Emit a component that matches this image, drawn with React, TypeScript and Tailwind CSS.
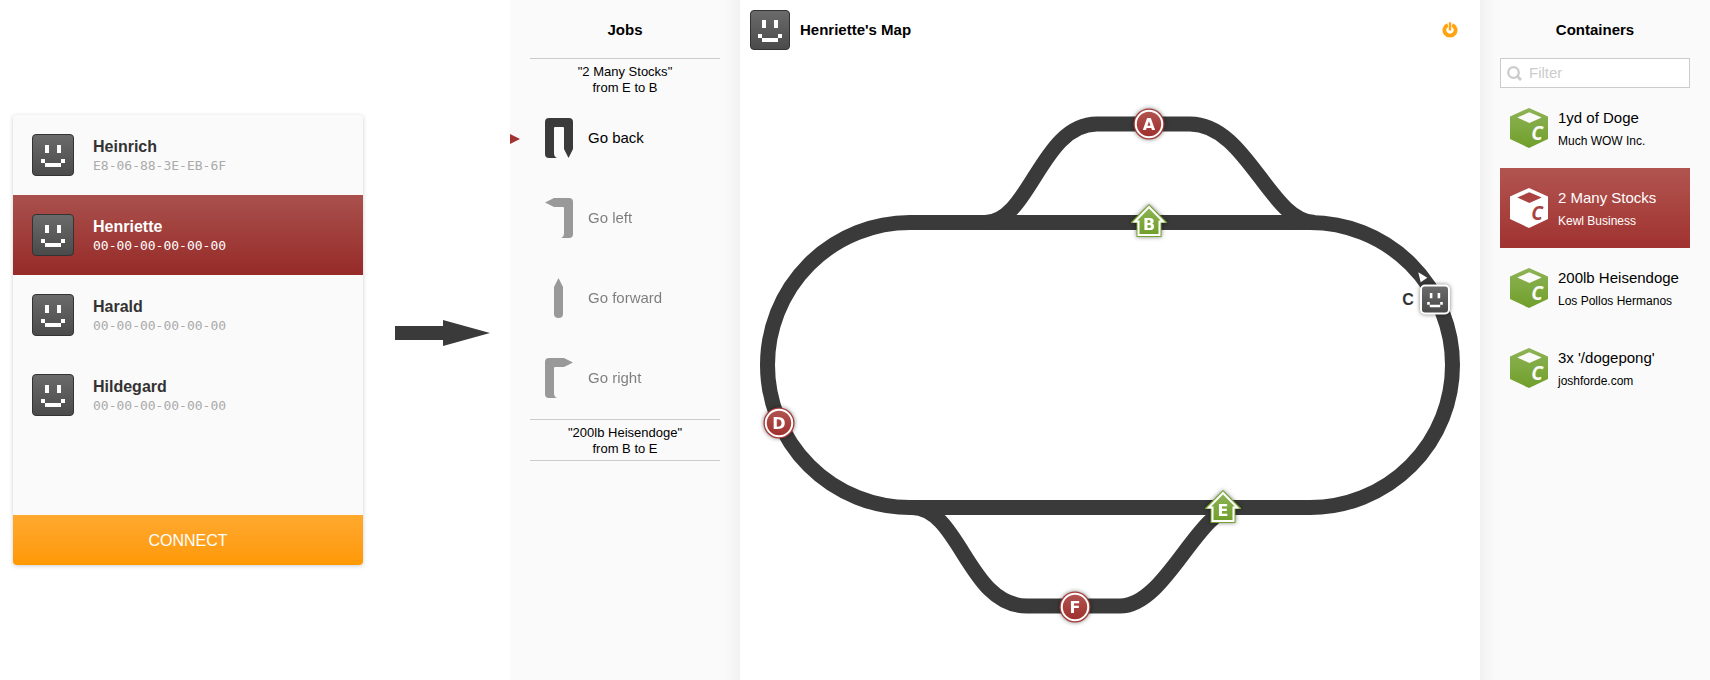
import { useState } from "react";

type Robot = { name: string; address: string };
type Container = { name: string; owner: string };

const robots: Robot[] = [
  { name: "Heinrich", address: "E8-06-88-3E-EB-6F" },
  { name: "Henriette", address: "00-00-00-00-00-00" },
  { name: "Harald", address: "00-00-00-00-00-00" },
  { name: "Hildegard", address: "00-00-00-00-00-00" },
];

const steps = [
  {
    label: "Go back",
    path: "M4 0H24Q28 0 28 4V31L23.5 40L19 31V10Q19 9 18 9H10Q9 9 9 10V35Q9 39 12 40H4Q0 40 0 36V4Q0 0 4 0Z",
  },
  {
    label: "Go left",
    path: "M0 4.5L9 0H24Q28 0 28 4V36Q28 40 24 40H16Q19 39 19 35V10Q19 9 18 9H9Z",
  },
  {
    label: "Go forward",
    path: "M13.5 0L18 9V36Q18 40 13.5 40Q9 40 9 36V9Z",
  },
  {
    label: "Go right",
    path: "M4 0H19L28 4.5L19 9H10Q9 9 9 10V35Q9 39 12 40H4Q0 40 0 36V4Q0 0 4 0Z",
  },
];

const containers: Container[] = [
  { name: "1yd of Doge", owner: "Much WOW Inc." },
  { name: "2 Many Stocks", owner: "Kewl Business" },
  { name: "200lb Heisendoge", owner: "Los Pollos Hermanos" },
  { name: "3x '/dogepong'", owner: "joshforde.com" },
];

function Face() {
  return (
    <path
      fill="#fff"
      d="M12 10h4v8h-4zM24 10h4v8h-4zM8 24h4v4h-4zM28 24h4v4h-4zM12 28h16v4h-16z"
    />
  );
}

function Defs() {
  return (
    <svg className="absolute size-0" aria-hidden="true">
      <defs>
        <linearGradient id="grey" x1="0" y1="0" x2="0" y2="1">
          <stop offset="0" stopColor="#6b6b6b" />
          <stop offset="1" stopColor="#4a4a4a" />
        </linearGradient>
        <linearGradient id="red" x1="0" y1="0" x2="0" y2="1">
          <stop offset="0" stopColor="#b15450" />
          <stop offset="1" stopColor="#9e2f2d" />
        </linearGradient>
        <linearGradient id="green" x1="0" y1="0" x2="0" y2="1">
          <stop offset="0" stopColor="#8cb356" />
          <stop offset="1" stopColor="#719f2a" />
        </linearGradient>
      </defs>
    </svg>
  );
}

function LargeAvatar() {
  return (
    <svg className="size-[42px] shrink-0" viewBox="-1 -1 42 42" aria-hidden="true">
      <rect x="-0.5" y="-0.5" width="41" height="41" rx="3.5" fill="url(#grey)" stroke="#333" />
      <Face />
    </svg>
  );
}

function Avatar() {
  return (
    <svg className="size-10 shrink-0" viewBox="0 0 40 40" aria-hidden="true">
      <rect x="0.5" y="0.5" width="39" height="39" rx="3.5" fill="url(#grey)" stroke="#333" />
      <Face />
    </svg>
  );
}

function Cube({ selected }: { selected: boolean }) {
  const face = selected ? "#fff" : "url(#green)";
  const cut = selected ? "#aa4340" : "#fafafa";
  return (
    <svg className="h-10 w-[38px] shrink-0" viewBox="0 0 38 40" aria-hidden="true">
      <path d="M19 0L38 8.500V31L19 40L0 31V8.500Z" fill={face} />
      <path d="M7.300 9.500L19.300 4.200L31.700 9.500L19.300 15Z" fill={cut} />
      <text
        x="27"
        y="32"
        textAnchor="middle"
        fill={cut}
        className="font-['Open_Sans',sans-serif] text-[19px] font-bold italic"
      >
        C
      </text>
    </svg>
  );
}

function Station({ x, y, name }: { x: number; y: number; name: string }) {
  return (
    <g className="drop-shadow-[0_0_2px_rgba(0,0,0,0.5)]">
      <circle cx={x} cy={y} r="15.500" fill="#a53b38" />
      <circle cx={x} cy={y} r="13.250" fill="url(#red)" stroke="#fff" strokeWidth="2" />
      <MarkerText x={x} y={y + 6} name={name} />
    </g>
  );
}

function Depot({ x, y, name }: { x: number; y: number; name: string }) {
  return (
    <g className="drop-shadow-[0_0_2px_rgba(0,0,0,0.5)]">
      <g transform={`translate(${x} ${y})`}>
        <path d="M0 -18L18 0V1H12.500V15H-12.500V1H-18V0Z" fill="#76a332" />
        <path
          d="M0 -15L14.200 -0.500H10.500V13H-10.500V-0.500H-14.200Z"
          fill="url(#green)"
          stroke="#fff"
          strokeWidth="2"
        />
      </g>
      <MarkerText x={x} y={y + 8} name={name} />
    </g>
  );
}

function MarkerText({ x, y, name }: { x: number; y: number; name: string }) {
  return (
    <text
      x={x}
      y={y}
      textAnchor="middle"
      fill="#fff"
      className="font-['DejaVu_Sans',sans-serif] text-[16px] font-bold"
    >
      {name}
    </text>
  );
}

function TrackMap() {
  return (
    <svg className="block w-full" viewBox="0 60 740 620" role="img" aria-label="Track map">
      <g fill="none" stroke="#3a3a3a" strokeWidth="15">
        <rect x="27.500" y="222.500" width="685" height="285" rx="142.500" />
        <path d="M245 222.500C290 222.500 301 124 357 124H450C507 124 530 222.500 575 222.500" />
        <path d="M172 507.500C220 507.500 228 606 287 606H380C426 606 458 507.500 496 507.500" />
      </g>
      <Station x={409} y={124} name="A" />
      <Depot x={409} y={222} name="B" />
      <Station x={39} y={423} name="D" />
      <Depot x={483} y={508} name="E" />
      <Station x={335} y={607} name="F" />
      <text
        x="668"
        y="305"
        textAnchor="middle"
        fill="#333"
        className="font-['Liberation_Sans',sans-serif] text-[16px] font-bold"
      >
        C
      </text>
      <path d="M678.300 272.300L687.300 277.700L680.700 282.300Z" fill="#fff" />
      <g className="drop-shadow-[0_0_2px_rgba(0,0,0,0.5)]">
        <rect x="680" y="284.500" width="30" height="30" rx="5" fill="#fff" />
        <rect x="682" y="286.500" width="26" height="26" rx="3" fill="url(#grey)" />
        <g transform="translate(682 286.500) scale(0.65)">
          <Face />
        </g>
      </g>
    </svg>
  );
}

function JobHeading({ cargo, route }: { cargo: string; route: string }) {
  return (
    <h3 className="border-t border-[#ccc] pt-[5px] pb-[3px] text-center text-[13px] leading-4">
      "{cargo}"
      <br />
      {route}
    </h3>
  );
}

export default function App() {
  const [robot, setRobot] = useState(1);
  const [container, setContainer] = useState(1);

  return (
    <div className="flex min-h-screen bg-white font-['Liberation_Sans',Arial,sans-serif] text-[15px] text-black">
      <Defs />

      <section className="flex w-[510px] shrink-0 items-center pl-[13px]" aria-label="Robots">
        <div className="w-[350px] overflow-hidden rounded bg-[#fafafa] shadow-[0_1px_4px_rgba(0,0,0,0.2)]">
          <ul className="pb-20">
            {robots.map((r, i) => (
              <li key={r.name}>
                <button
                  type="button"
                  onClick={() => setRobot(i)}
                  className={
                    i === robot
                      ? "flex h-20 w-full items-center gap-[19px] bg-linear-to-b from-[#a9504d] to-[#962a28] px-[19px] text-left text-white"
                      : "flex h-20 w-full items-center gap-[19px] px-[19px] text-left text-[#333]"
                  }
                >
                  <LargeAvatar />
                  <span>
                    <span className="block pt-0.5 text-base leading-5 font-bold">{r.name}</span>
                    <span
                      className={
                        i === robot
                          ? "block font-['DejaVu_Sans_Mono',monospace] text-[13px] leading-[18px]"
                          : "block font-['DejaVu_Sans_Mono',monospace] text-[13px] leading-[18px] text-[#aaa]"
                      }
                    >
                      {r.address}
                    </span>
                  </span>
                </button>
              </li>
            ))}
          </ul>
          <button
            type="button"
            className="h-[50px] w-full bg-linear-to-b from-[#ffa92d] to-[#ff9800] pt-0.5 text-base text-white"
          >
            CONNECT
          </button>
        </div>
        <svg className="mb-3.5 ml-8 h-[26px] w-[95px]" viewBox="0 0 95 26" aria-hidden="true">
          <path d="M0 6H48V0L95 13L48 26V20H0Z" fill="#3a3a3a" />
        </svg>
      </section>

      <aside className="w-[230px] shrink-0 bg-[linear-gradient(to_left,#f1f1f1,#fafafa_15px)] px-5">
        <h2 className="flex h-[58px] items-center justify-center pt-0.5 font-bold">Jobs</h2>
        <JobHeading cargo="2 Many Stocks" route="from E to B" />
        <ol>
          {steps.map((step, i) => (
            <li
              key={step.label}
              className={
                i === 0
                  ? "relative -mx-5 flex h-20 items-center gap-[15px] px-[35px] pb-0.5"
                  : "relative -mx-5 flex h-20 items-center gap-[15px] px-[35px] pb-0.5 opacity-50"
              }
            >
              {i === 0 && (
                <svg
                  className="absolute top-1/2 left-0 h-2.5 w-2.5 -translate-y-1/2"
                  viewBox="0 0 10 10"
                  aria-hidden="true"
                >
                  <path d="M0 0L10 5L0 10Z" fill="#a13230" />
                </svg>
              )}
              <svg className="h-10 w-7 shrink-0" viewBox="0 0 28 40" aria-hidden="true">
                <path d={step.path} fill="#3a3a3a" />
              </svg>
              {step.label}
            </li>
          ))}
        </ol>
        <div className="border-b border-[#ccc]">
          <JobHeading cargo="200lb Heisendoge" route="from B to E" />
        </div>
      </aside>

      <main className="min-w-0 flex-1">
        <header className="flex h-[60px] items-center gap-2.5 pr-[22px] pl-2.5">
          <Avatar />
          <h1 className="flex-1 font-bold">Henriette's Map</h1>
          <button type="button" aria-label="Disconnect">
            <svg className="size-4" viewBox="0 0 16 16" aria-hidden="true">
              <path
                d="M5.800 2.900A5.600 5.600 0 1 0 10.200 2.900"
                fill="none"
                stroke="#ffa30f"
                strokeWidth="3.800"
              />
              <path d="M8 0.300V8.500" stroke="#ffa30f" strokeWidth="2.400" />
            </svg>
          </button>
        </header>
        <TrackMap />
      </main>

      <aside className="w-[230px] shrink-0 bg-[linear-gradient(to_right,#f1f1f1,#fafafa_15px)] px-5">
        <h2 className="flex h-[58px] items-center justify-center pt-0.5 font-bold">Containers</h2>
        <div className="flex h-[30px] items-center gap-[7px] border border-[#ccc] bg-white px-1.5">
          <label htmlFor="filter" aria-label="Filter containers">
            <svg className="size-[15px]" viewBox="0 0 15 15" fill="none" stroke="#ccc" aria-hidden="true">
              <circle cx="6.500" cy="6.500" r="5.300" strokeWidth="2.200" />
              <path d="M10.300 10.300L14 14" strokeWidth="2.800" />
            </svg>
          </label>
          <input
            id="filter"
            type="text"
            placeholder="Filter"
            className="min-w-0 flex-1 outline-none placeholder:text-[#ccc]"
          />
        </div>
        <ul>
          {containers.map((c, i) => (
            <li key={c.name}>
              <button
                type="button"
                onClick={() => setContainer(i)}
                className={
                  i === container
                    ? "flex h-20 w-full items-center gap-2.5 bg-linear-to-b from-[#b15450] to-[#a03230] px-2.5 text-left whitespace-nowrap text-white"
                    : "flex h-20 w-full items-center gap-2.5 px-2.5 text-left whitespace-nowrap"
                }
              >
                <Cube selected={i === container} />
                <span className="pt-0.5">
                  <span className="block leading-6">{c.name}</span>
                  <span className="block text-xs leading-[22px]">{c.owner}</span>
                </span>
              </button>
            </li>
          ))}
        </ul>
      </aside>
    </div>
  );
}
